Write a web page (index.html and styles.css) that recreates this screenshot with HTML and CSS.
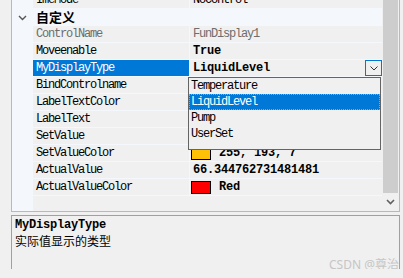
FILE: index.html
```html
<!DOCTYPE html>
<html lang="zh-CN">
<head>
    <meta charset="UTF-8">
    <title>PropertyGrid</title>
    <link rel="stylesheet" href="styles.css">
</head>
<body>
    <div class="page">
        <div class="grid">
            <div class="list">
                <div class="row">
                    <span></span>
                    <span class="name">ImeMode</span>
                    <span class="value">NoControl</span>
                </div>
                <div class="row category">
                    <span class="toggle">
                        <svg width="9" height="6" viewBox="0 0 9 6"><polyline points="1,1 4.5,4.5 8,1" fill="none" stroke="#555" stroke-width="1.4"/></svg>
                    </span>
                    <span class="cat-title">自定义</span>
                </div>
                <div class="row">
                    <span></span>
                    <span class="name muted">ControlName</span>
                    <span class="value muted">FunDisplay1</span>
                </div>
                <div class="row">
                    <span></span>
                    <span class="name">Moveenable</span>
                    <span class="value bold">True</span>
                </div>
                <div class="row">
                    <span></span>
                    <span class="name selected">MyDisplayType</span>
                    <span class="value bold">LiquidLevel
                        <span class="drop-btn">
                            <svg width="8" height="5" viewBox="0 0 8 5"><polyline points="0.5,0.5 4,4 7.5,0.5" fill="none" stroke="#333" stroke-width="1"/></svg>
                        </span>
                    </span>
                </div>
                <div class="row">
                    <span></span>
                    <span class="name">BindControlname</span>
                    <span class="value"></span>
                </div>
                <div class="row">
                    <span></span>
                    <span class="name">LabelTextColor</span>
                    <span class="value"></span>
                </div>
                <div class="row">
                    <span></span>
                    <span class="name">LabelText</span>
                    <span class="value"></span>
                </div>
                <div class="row">
                    <span></span>
                    <span class="name">SetValue</span>
                    <span class="value"></span>
                </div>
                <div class="row">
                    <span></span>
                    <span class="name">SetValueColor</span>
                    <span class="value color bold"><span class="swatch yellow"></span>255, 193, 7</span>
                </div>
                <div class="row">
                    <span></span>
                    <span class="name">ActualValue</span>
                    <span class="value bold">66.344762731481481</span>
                </div>
                <div class="row">
                    <span></span>
                    <span class="name">ActualValueColor</span>
                    <span class="value color bold"><span class="swatch red"></span>Red</span>
                </div>
            </div>
            <div class="scroll">
                <div class="thumb"></div>
                <div class="arrow">
                    <svg width="9" height="6" viewBox="0 0 9 6"><polyline points="1,1 4.5,4.5 8,1" fill="none" stroke="#606060" stroke-width="1.6"/></svg>
                </div>
            </div>

            <div class="dropdown">
                <div class="item">Temperature</div>
                <div class="item active">LiquidLevel</div>
                <div class="item">Pump</div>
                <div class="item">UserSet</div>
            </div>
        </div>

        <div class="help">
            <div class="help-title">MyDisplayType</div>
            <div class="help-text">实际值显示的类型</div>
            <div class="watermark">CSDN @尊治</div>
        </div>
    </div>
</body>
</html>
```

FILE: styles.css
```css
body {
    margin: 0;
    background-color: #f0f0f0;
    overflow: hidden;
    font-family: "Liberation Mono", monospace;
    font-size: 12px;
    color: #000;
}
.page {
    padding: 0 3px 0 11px;
    height: 278px;
    box-sizing: border-box;
}
.grid {
    position: relative;
    display: flex;
    margin-top: -9px;
    height: 221px;
    box-sizing: border-box;
    border: 1px solid #a9bcd5;
}
.list {
    flex: 1;
    background: linear-gradient(to right, #f4f7fc 21px, #f0f0f0 21px);
}
.row {
    display: grid;
    grid-template-columns: 21px 156px 1fr;
    height: 17px;
    box-sizing: border-box;
    border-bottom: 1px solid #f4f7fc;
    line-height: 16px;
}
.name {
    padding-left: 3px;
    white-space: nowrap;
    letter-spacing: -1.2px;
    overflow: hidden;
}
.name.selected {
    background-color: #0078d7;
    color: #fff;
}
.value {
    display: flex;
    align-items: center;
    border-left: 1px solid #f4f7fc;
    padding-left: 3px;
    white-space: nowrap;
    letter-spacing: -1.2px;
    overflow: hidden;
}
.value.bold {
    font-weight: bold;
    letter-spacing: -0.2px;
}
.value.color {
    padding-left: 1px;
}
.muted {
    color: #6d6d6d;
}
.category {
    display: flex;
    background-color: #f4f7fc;
}
.toggle {
    width: 21px;
    display: flex;
    align-items: center;
    justify-content: center;
    padding-top: 1px;
}
.cat-title {
    padding-left: 3px;
    font-family: "Noto Sans CJK SC", sans-serif;
    font-weight: bold;
    font-size: 13px;
    line-height: 16px;
}
.drop-btn {
    margin-left: auto;
    width: 17px;
    height: 16px;
    box-sizing: border-box;
    border: 1px solid #0078d7;
    background-color: #f0f0f0;
    display: flex;
    align-items: center;
    justify-content: center;
}
.swatch {
    width: 20px;
    height: 13px;
    box-sizing: border-box;
    border: 1px solid #000;
    margin-right: 8px;
}
.swatch.yellow {
    background-color: #ffc107;
}
.swatch.red {
    background-color: #ff0000;
}
.scroll {
    width: 17px;
    display: flex;
    flex-direction: column;
    background-color: #f0f0f0;
}
.thumb {
    height: 201px;
    margin: 0 1px;
    background-color: #cdcdcd;
}
.arrow {
    flex: 1;
    display: flex;
    align-items: center;
    justify-content: center;
}
.dropdown {
    position: absolute;
    left: 176px;
    top: 85px;
    width: 193px;
    height: 73px;
    box-sizing: border-box;
    border: 1px solid #646464;
    background-color: #f0f0f0;
}
.item {
    height: 16px;
    line-height: 16px;
    padding-left: 2px;
    letter-spacing: -1.2px;
}
.item.active {
    background-color: #0078d7;
    color: #fff;
    outline: 1px dotted #ff8728;
    outline-offset: -1px;
}
.help {
    position: relative;
    margin-top: 3px;
    height: 59px;
    box-sizing: border-box;
    border: 1px solid #a0a0a0;
    padding: 1px 3px;
    overflow: hidden;
}
.help-title {
    font-weight: bold;
    letter-spacing: -0.2px;
    line-height: 16px;
}
.help-text {
    font-family: "Noto Sans CJK SC", sans-serif;
    font-size: 12px;
    line-height: 16px;
}
.watermark {
    position: absolute;
    right: 0;
    bottom: 0;
    font-family: "Noto Sans", "Noto Sans CJK SC", sans-serif;
    font-size: 12px;
    color: #c6c6c6;
}
```
